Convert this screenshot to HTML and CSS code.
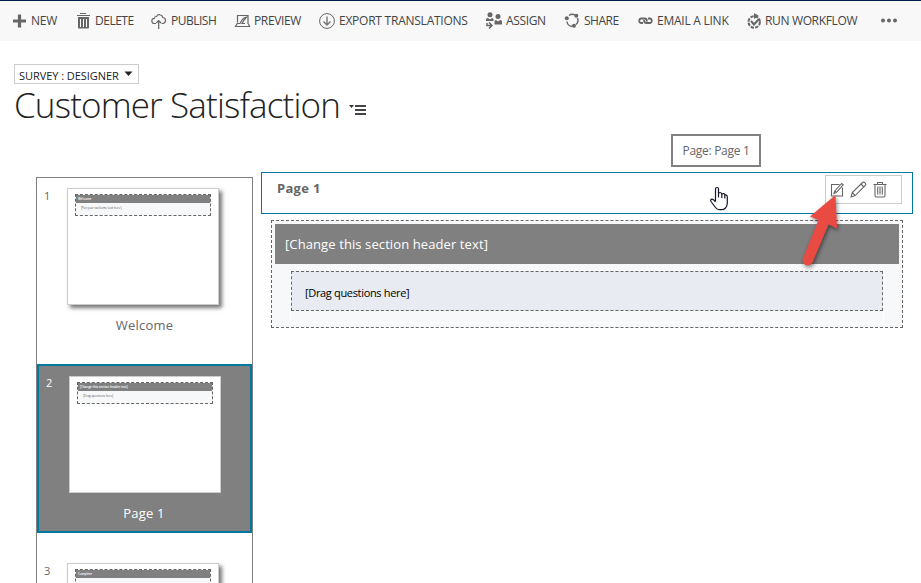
FILE: index.html
```html
<!DOCTYPE html>
<html lang="en">
<head>
<meta charset="utf-8">
<title>Customer Satisfaction</title>
<link rel="stylesheet" href="styles.css">
</head>
<body>
<nav class="toolbar">
  <a class="cmd"><svg class="ico" width="19" height="18" viewBox="0 0 19 18"><path d="M7.500 2.500v13M1 9h13" stroke="#666" stroke-width="3.200" fill="none"/></svg><span class="t-new">NEW</span></a>
  <a class="cmd"><svg class="ico" width="19" height="18" viewBox="0 0 19 18"><path d="M4 1.500h6M1 3.500h13" stroke="#666" fill="none"/><path d="M2 5h11v10.500q0 1-1 1H3q-1 0-1-1z" fill="#666"/><path d="M4.500 7v8M7.500 7v8M10.500 7v8" stroke="#f8f8f8" stroke-width="1"/></svg><span class="t-delete">DELETE</span></a>
  <a class="cmd"><svg class="ico" width="19" height="18" viewBox="0 0 19 18"><path d="M5 11.500H3.500A2.500 2.500 0 0 1 3.300 6.300Q3.700 4.500 5.500 4.500Q7 2 9.500 3Q11.500 3.600 11.700 5.500Q14.500 5.500 14.500 8.500Q14.300 11.500 11.500 11.500H10.500M7.700 17V8.500M5.300 11L7.700 8.500L10.100 11" stroke="#666" stroke-width="1.200" fill="none"/></svg><span class="t-publish">PUBLISH</span></a>
  <a class="cmd"><svg class="ico" width="19" height="18" viewBox="0 0 19 18"><path d="M3.500 10.500V3.500h10.500V12M3.500 11L1.500 14.500H15.500L14.500 12M3.500 11.500H6L8 8Q9.500 5.500 12.500 5Q9.500 8.500 8 11.500H11" stroke="#666" stroke-width="1.200" fill="none"/></svg><span class="t-preview">PREVIEW</span></a>
  <a class="cmd"><svg class="ico" width="19" height="18" viewBox="0 0 19 18"><circle cx="9" cy="9" r="7.400" stroke="#666" fill="none"/><path d="M9 4.500v8M5.500 9.500L9 13L12.500 9.500" stroke="#777" stroke-width="1.400" fill="none"/></svg><span class="t-export">EXPORT TRANSLATIONS</span></a>
  <a class="cmd"><svg class="ico" width="19" height="18" viewBox="0 0 19 18" fill="#666"><circle cx="5" cy="2.800" r="2.500"/><path d="M1 9V7.500q0-1.500 2-1.500l2 1.500l2-1.500q1.500 0 1.500 1.500v1.500z"/><circle cx="13" cy="4.500" r="2.500"/><path d="M9.500 12.500V9.500q0-1.500 1.500-1.500l2 1.500l2-1.500q2 0 2 1.500v3z"/><path d="M2 11v2.500h4M4 10.500L7 13.500L4 16.500" stroke="#666" stroke-width="1.500" fill="none"/></svg><span class="t-assign">ASSIGN</span></a>
  <a class="cmd"><svg class="ico" width="19" height="18" viewBox="0 0 19 18"><path d="M5 3.500A5.600 5.600 0 0 1 11 3M13.500 6A5.800 5.800 0 0 1 12 12.500M8.500 14.500A5.500 5.500 0 0 1 3 9.500" stroke="#666" stroke-width="1.400" fill="none"/><g fill="#666"><circle cx="2.800" cy="6.300" r="2"/><circle cx="12.300" cy="3.700" r="2"/><circle cx="10" cy="13.800" r="2"/></g></svg><span class="t-share">SHARE</span></a>
  <a class="cmd"><svg class="ico" width="19" height="18" viewBox="0 0 19 18"><path d="M6 11H4A2.300 2.300 0 0 1 4 6.500H7.500Q10 6.500 10 9.500M11 6.500H13A2.300 2.300 0 0 1 13 11H9.500Q7 11 7 8" stroke="#666" stroke-width="1.800" fill="none"/></svg><span class="t-email">EMAIL A LINK</span></a>
  <a class="cmd"><svg class="ico" width="19" height="18" viewBox="0 0 19 18"><circle cx="7.200" cy="10" r="5.700" fill="none" stroke="#666" stroke-width="2" stroke-dasharray="3.300 1.170"/><path d="M7 1l5 3l-5 3z" fill="#666"/><path d="M4 9l3 3.500l5-5.500" stroke="#666" stroke-width="2" fill="none"/></svg><span class="t-run">RUN WORKFLOW</span></a>
  <a class="cmd"><svg class="ico" width="19" height="18" viewBox="0 0 19 18" fill="#666"><circle cx="3" cy="8.500" r="2"/><circle cx="9" cy="8.500" r="2"/><circle cx="15" cy="8.500" r="2"/></svg></a>
</nav>

<header class="heading">
  <div class="selector"><span>SURVEY : DESIGNER</span><svg width="9" height="6" viewBox="0 0 9 6"><path d="M0.500 0.500h8l-4 4.500z" fill="#222"/></svg></div>
  <div class="title-row"><h1>Customer Satisfaction</h1><svg class="list-ico" width="18" height="12" viewBox="0 0 18 12"><path d="M0 1h5l-2.500 3z" fill="#333"/><path d="M6 2h11M6 6h11M6 10h11" stroke="#444" stroke-width="2"/></svg></div>
</header>

<main class="designer">
  <aside class="pages">
    <section class="page-item">
      <span class="num">1</span>
      <div class="thumb"><div class="mini"><div class="mini-head">Welcome</div><div class="mini-body">[Put your welcome text here]</div></div></div>
      <p class="label">Welcome</p>
    </section>
    <section class="page-item selected">
      <span class="num">2</span>
      <div class="thumb"><div class="mini"><div class="mini-head">[Change this section header text]</div><div class="mini-body">[Drag questions here]</div></div></div>
      <p class="label">Page 1</p>
    </section>
    <section class="page-item third">
      <span class="num">3</span>
      <div class="thumb"><div class="mini"><div class="mini-head">Complete</div><div class="mini-body"></div></div></div>
    </section>
  </aside>

  <div class="editor">
    <div class="page-bar">
      <strong>Page 1</strong>
      <div class="tools">
        <svg width="14" height="16" viewBox="0 0 14 16" fill="none" stroke="#666" stroke-width="1.100"><path d="M9.500 2.500H1.500v11.500h11V5.500M4 11.500l.8-2.500L11.700 1.500l1.500 1.300L6.500 10.400zM5 9l1.500 1.400"/></svg>
        <svg width="17" height="17" viewBox="0 0 17 17" fill="none" stroke="#666" stroke-width="1.100"><path d="M1 16l1.300-4.500L12.500 1.500q1-1 2.500.3t.3 2.700L5.200 14.600zM2.300 11.500l2.900 3.100M11 3l2.900 3"/></svg>
        <svg width="14" height="17" viewBox="0 0 14 17" fill="none" stroke="#666" stroke-width="1.100"><path d="M.5 3.500h13M4.500 3V1.500h5V3M2 3.500v11q0 1.500 1.500 1.500h7q1.500 0 1.500-1.500v-11M4.700 5.500v8M7 5.500v8M9.300 5.500v8"/></svg>
      </div>
    </div>
    <div class="section">
      <div class="section-head">[Change this section header text]</div>
      <div class="section-body"><div class="drop">[Drag questions here]</div></div>
    </div>
  </div>
</main>

<div class="tooltip"><span>Page: Page 1</span></div>
<svg class="cursor" width="20" height="26" viewBox="0 0 20 26"><path d="M6.500 15V3Q6.500 1.500 8 1.500T9.500 3V11V8Q9.700 6.500 11 6.500T12.800 8Q15.500 6.800 15.800 9Q18.300 8.500 18.300 11V17Q18.300 20 16.500 22Q15 23.700 12.500 23.700H10.500Q8 23.700 6.500 21.500L2 15.500Q1 13.500 3 13.200Q4.500 13 6.500 16M12.800 8v4M15.800 9v3.500" fill="#fff" stroke="#161629" stroke-width="1.200" stroke-linejoin="round"/></svg>
<svg class="arrow" width="50" height="85" viewBox="0 0 50 85"><path d="M38.500 5L13 26.500L21.500 30L6 68.500Q4.500 73 8.500 75Q13 76.500 15.500 72.500L31.500 34.500L40 38.500Z" fill="#e94b43"/></svg>
</body>
</html>
```
FILE: styles.css
```css
* { box-sizing: border-box; }
body { margin: 0; width: 921px; height: 583px; overflow: hidden; position: relative; background: #fff; color: #444; font-family: "Open Sans", "Noto Sans", sans-serif; font-size: 12px; }

.toolbar { height: 41px; border-top: 1px solid #001e4c; background: #f8f8f8; display: grid; grid-template-columns: 64px 75px 83px 84px 167px 79px 73px 110px 133px 30px; padding-left: 12px; align-items: center; }
.cmd { display: flex; align-items: center; white-space: nowrap; color: #444; line-height: 18px; }
.ico { flex: none; }
.cmd span { letter-spacing: -0.5px; }
.cmd .t-new { letter-spacing: -0.2px; }
.cmd .t-publish { margin-left: 1px; }
.cmd .t-preview { margin-left: 1px; letter-spacing: -0.35px; }
.cmd .t-export { margin-left: 2px; letter-spacing: -0.24px; }
.cmd .t-assign { margin-left: 2px; letter-spacing: -0.35px; }
.cmd .t-share { margin-left: 1px; }
.cmd .t-email { margin-left: 1px; letter-spacing: -0.25px; }
.cmd .t-run { margin-left: -1px; letter-spacing: -0.35px; }

.heading { padding: 23px 0 0 14px; height: 101px; }
.selector { width: 125px; height: 20px; border: 1px solid #ccc; display: flex; align-items: center; padding: 0 5px 0 4px; justify-content: space-between; font-size: 11px; line-height: 14px; color: #222; letter-spacing: -0.05px; white-space: nowrap; }
.selector span { font-size: 11px; margin-top: 3px; }
.title-row { display: flex; align-items: flex-start; }
h1 { margin: 0; width: 335px; height: 42px; line-height: 42px; font-size: 35px; font-weight: 300; color: #222; white-space: nowrap; letter-spacing: -0.85px; }
.list-ico { margin-top: 20px; }

.designer { display: flex; align-items: flex-start; height: 441px; padding: 30px 0 0 36px; }
.pages { width: 217px; height: 411px; margin-top: 5px; border: 1px solid #808080; border-bottom: 0; overflow: hidden; }
.page-item { height: 186px; padding: 10px 0 0 7px; display: grid; grid-template-columns: 23px 152px; grid-template-rows: 117px 40px; }
.num { font-size: 11px; line-height: 16px; color: #666; }
.thumb { width: 152px; height: 117px; padding: 5px 7px; background: #fff; border: 1px solid #ccc; box-shadow: 3px 3px 4px #777; }
.mini { height: 22px; border: 1px dashed #666; background: #f7f8fa; font-size: 3px; }
.mini-head { height: 8px; line-height: 8px; padding-left: 2px; background: #808080; color: #fff; font-weight: 600; }
.mini-body { line-height: 11px; padding-left: 5px; color: #555; }
.label { grid-column: 1 / 3; margin: 10px 0 0 23px; width: 155px; text-align: center; font-size: 13px; line-height: 20px; color: #666; letter-spacing: 0.2px; }
.selected { height: 169px; border: 2px solid #0078a0; background: #808080; }
.selected .num { color: #fff; line-height: 14px; }
.selected .label { color: #fff; width: 150px; }
.selected .thumb { box-shadow: none; }
.third { margin-top: 20px; }

.editor { width: 652px; margin-left: 8px; }
.page-bar { height: 42px; border: 1px solid #0078a0; padding: 2px 10px 0 15px; display: flex; justify-content: space-between; align-items: flex-start; }
.page-bar strong { font-size: 13px; line-height: 26px; color: #666; letter-spacing: 0.3px; }
.tools { width: 77px; height: 29px; border: 1px solid #ccc; display: flex; align-items: center; gap: 6px; padding-left: 4px; }
.section { width: 632px; height: 108px; margin: 6px 0 0 10px; padding: 3px; border: 1px dashed #666; background: #f7f8fa; }
.section-head { height: 40px; padding-left: 10px; line-height: 40px; background: #808080; color: #fff; font-size: 13px; letter-spacing: 0.1px; }
.section-body { margin: 6px 15px 0; height: 53px; padding-top: 1px; border: 1px solid #fff; border-top: 0; }
.drop { height: 40px; padding-left: 13px; border: 1px dashed #666; background: #e8ebf1; line-height: 42px; color: #000; font-size: 11px; letter-spacing: -0.33px; }

.tooltip { position: absolute; left: 671px; top: 134px; width: 90px; height: 33px; border: 2px solid #808080; background: #fff; color: #666; text-align: center; line-height: 29px; font-size: 12px; letter-spacing: -0.3px; white-space: nowrap; }
.cursor { position: absolute; left: 709px; top: 186px; }
.arrow { position: absolute; left: 797px; top: 190px; filter: drop-shadow(1px 2px 2px rgba(0,0,0,.5)); }
```
